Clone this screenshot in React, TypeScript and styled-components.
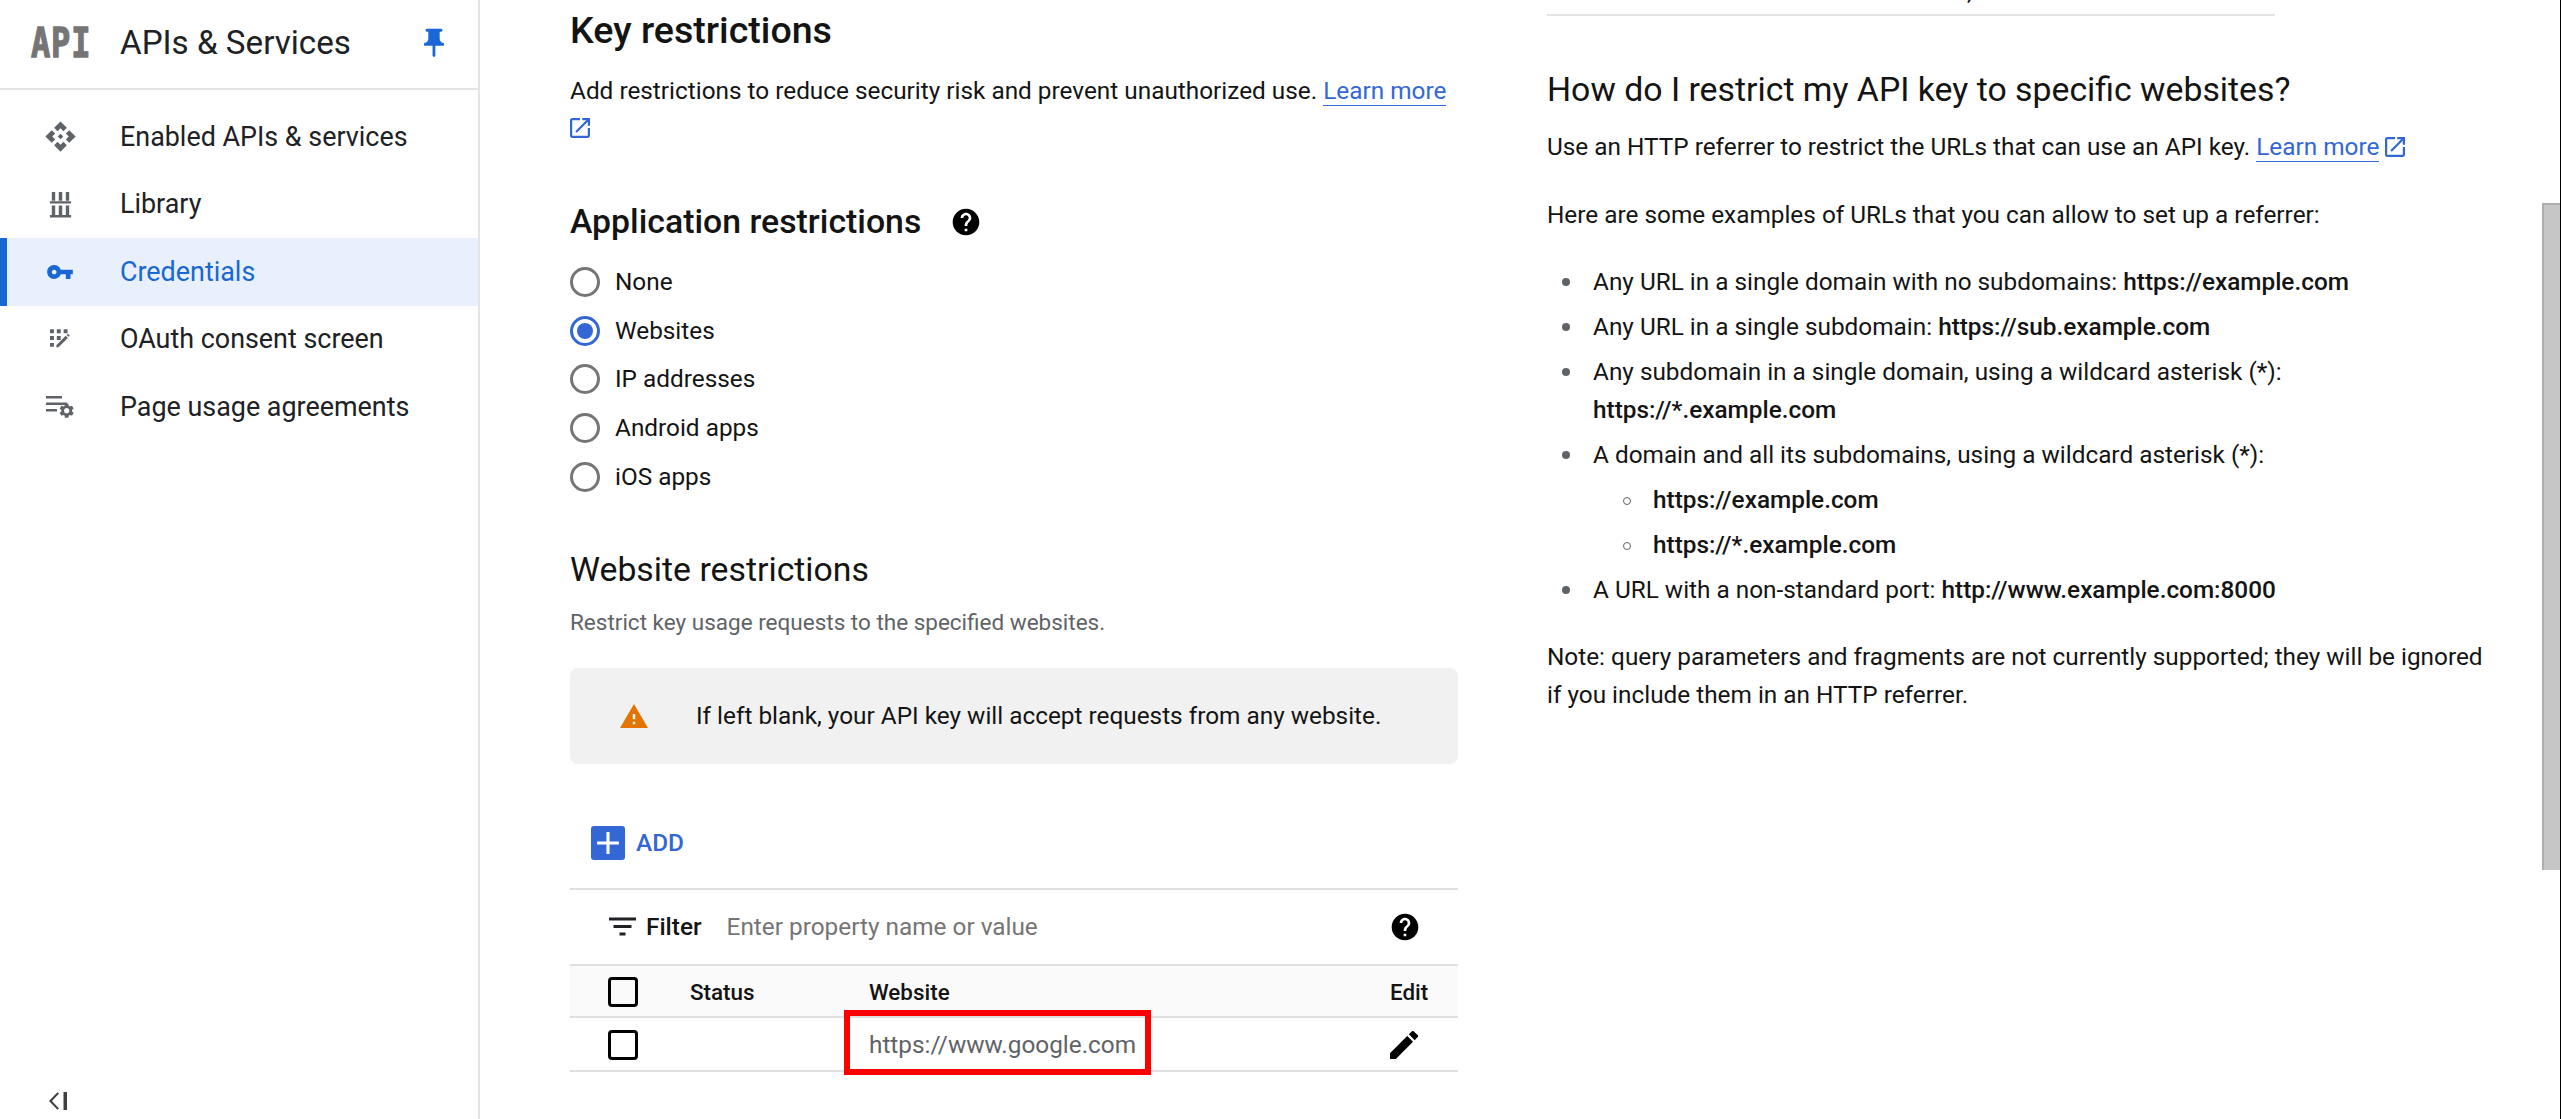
import React from "react";
import styled, { createGlobalStyle } from "styled-components";

const Global = createGlobalStyle`
  html, body { margin: 0; padding: 0; height: 100%; overflow: hidden; background: #fff; }
  body { font-family: Roboto, "Liberation Sans", sans-serif; color: #202124; }
  * { box-sizing: border-box; }
`;

const INK = "#141414";

const Page = styled.div`
  display: flex;
  width: 100%;
  height: 1119px;
  overflow: hidden;
`;

/* ---------- sidebar ---------- */
const Sidebar = styled.aside`
  flex: 0 0 480px;
  display: flex;
  flex-direction: column;
  border-right: 2px solid #e3e4e6;
`;
const SideHeader = styled.header`
  flex: 0 0 90px;
  display: flex;
  align-items: center;
  padding: 0 27px 2px 31px;
  border-bottom: 2px solid #e3e4e6;
`;
const LogoMark = styled.span`
  flex: 0 0 89px;
  font-family: "DejaVu Sans Mono", monospace;
  font-weight: 700;
  font-size: 32px;
  line-height: 30px;
  letter-spacing: 0.8px;
  color: #757575;
  -webkit-text-stroke: 1px #757575;
  display: inline-block;
  transform: scaleY(1.3);
  transform-origin: center;
`;
const SideTitle = styled.div`
  flex: 1;
  font-size: 33.2px;
  line-height: 40px;
  color: #202124;
`;
const Nav = styled.nav`
  display: flex;
  flex-direction: column;
  padding-top: 13px;
`;
const NavItem = styled.a<{ $active?: boolean }>`
  height: 67.5px;
  display: flex;
  align-items: center;
  font-size: 26.9px;
  color: ${(p) => (p.$active ? "#1967d2" : "#202124")};
  background: ${(p) => (p.$active ? "#e8f0fe" : "transparent")};
  box-shadow: ${(p) => (p.$active ? "inset 7px 0 0 #1967d2" : "none")};
`;
const NavIconCell = styled.span`
  flex: 0 0 120px;
  display: flex;
  justify-content: center;
`;
const CollapseRow = styled.div`
  margin-top: auto;
  height: 27px;
  padding-left: 49px;
`;

/* ---------- icons ---------- */
const Icon = styled.svg<{ $size: number; $color?: string }>`
  width: ${(p) => p.$size}px;
  height: ${(p) => p.$size}px;
  fill: ${(p) => p.$color || "currentColor"};
  flex: none;
  display: block;
`;
const InlineLinkIcon = styled.svg<{ $gap: number }>`
  display: inline-block;
  width: 20px;
  height: 20px;
  margin-left: ${(p) => p.$gap}px;
  fill: #3367d6;
  vertical-align: -2px;
`;
const GRAY = "#5f6368";

const ApiIcon = () => (
  <Icon viewBox="0 0 24 24" $size={33} $color={GRAY}>
    <path d="M14 12l-2 2-2-2 2-2 2 2zm-2-6l2.12 2.12 2.5-2.5L12 1 7.38 5.62l2.5 2.5L12 6zm-6 6l2.12-2.12-2.5-2.5L1 12l4.62 4.62 2.5-2.5L6 12zm12 0l-2.12 2.12 2.5 2.5L23 12l-4.62-4.62-2.5 2.5L18 12zm-6 6l-2.12-2.12-2.5 2.5L12 23l4.62-4.62-2.5-2.5L12 18z" />
  </Icon>
);
const LibraryIcon = () => (
  <Icon viewBox="0 0 24 28" $size={27} $color={GRAY}>
    <path d="M3 1h3.500v9H3zM10.200 1h3.600v9h-3.600zM17.500 1H21v9h-3.500zM1 10.500h22v2.500H1zM3 15h3.500v10H3zM10.200 15h3.600v10h-3.600zM17.500 15H21v10h-3.500zM1 25h22v2.500H1z" />
  </Icon>
);
const KeyIcon = () => (
  <Icon viewBox="0 0 24 24" $size={28} $color="#1967d2">
    <path d="M12.65 10C11.83 7.67 9.61 6 7 6c-3.31 0-6 2.69-6 6s2.69 6 6 6c2.61 0 4.83-1.67 5.65-4H17v4h4v-4h2v-4H12.65zM7 14c-1.1 0-2-.9-2-2s.9-2 2-2 2 .9 2 2-.9 2-2 2z" />
  </Icon>
);
const ConsentIcon = () => (
  <Icon viewBox="3 3 20.500 20" $size={20} $color={GRAY}>
    <path d="M3 3h4v4H3zM10 3h4v4h-4zM17 3h4v4h-4zM3 10h4v4H3zM10 10h4v4h-4zM3 17h4v4H3zM9.500 21.500v-2.200l9.600-9.600 2.200 2.200-9.600 9.600zM20 8.800l1.300-1.300 2 2-1.300 1.300z" />
  </Icon>
);
const UsageIcon = () => (
  <Icon viewBox="0 0 30 24" $size={30} $color={GRAY}>
    <path d="M1 1h16v2.400H1zM1 7.500h21v2.400H1zM1 14h11v2.400H1z" />
    <g transform="translate(12.800 6.800) scale(0.74)">
      <path d="M19.140 12.940c.04-.3.06-.61.06-.94 0-.32-.02-.64-.07-.94l2.030-1.580a.49.49 0 0 0 .12-.61l-1.920-3.320a.488.488 0 0 0-.59-.22l-2.390.96c-.5-.38-1.030-.7-1.620-.94l-.36-2.540a.484.484 0 0 0-.48-.41h-3.840c-.24 0-.43.17-.47.41l-.36 2.540c-.59.24-1.130.57-1.620.94l-2.390-.96c-.22-.08-.47 0-.59.22L2.740 8.870c-.12.21-.08.47.12.61l2.030 1.580c-.05.3-.09.63-.09.94s.02.64.07.94l-2.030 1.580a.49.49 0 0 0-.12.61l1.920 3.320c.12.22.37.29.59.22l2.390-.96c.5.38 1.030.7 1.620.94l.36 2.540c.05.24.24.41.48.41h3.840c.24 0 .44-.17.47-.41l.36-2.540c.59-.24 1.130-.56 1.620-.94l2.390.96c.22.08.47 0 .59-.22l1.920-3.320c.12-.22.07-.47-.12-.61l-2.010-1.580zM12 15.600c-1.980 0-3.600-1.620-3.600-3.600s1.620-3.600 3.600-3.600 3.600 1.620 3.600 3.600-1.620 3.600-3.600 3.600z" />
    </g>
  </Icon>
);
const PinIcon = () => (
  <Icon viewBox="0 0 24 24" $size={34} $color="#1a68d8">
    <path d="M16 9V4h1c.55 0 1-.45 1-1s-.45-1-1-1H7c-.55 0-1 .45-1 1s.45 1 1 1h1v5c0 1.660-1.340 3-3 3v2h5.970v7l1 1 1-1v-7H19v-2c-1.660 0-3-1.340-3-3z" />
  </Icon>
);
const CollapseIcon = () => (
  <Icon viewBox="0 0 18 18" $size={18} $color="#3c4043">
    <path d="M10 1.600L8.500.2 0 9l8.500 8.800L10 16.400 3 9zM14.500 0H18v18h-3.500z" />
  </Icon>
);
const HelpIcon = () => (
  <Icon viewBox="0 0 24 24" $size={32} $color="#000">
    <path d="M12 2C6.480 2 2 6.480 2 12s4.480 10 10 10 10-4.480 10-10S17.520 2 12 2zm1 17h-2v-2h2v2zm2.070-7.750l-.9.92C13.450 12.900 13 13.500 13 15h-2v-.5c0-1.100.45-2.100 1.170-2.830l1.240-1.260c.37-.36.59-.86.59-1.410 0-1.100-.9-2-2-2s-2 .9-2 2H8c0-2.210 1.790-4 4-4s4 1.790 4 4c0 .88-.36 1.680-.93 2.250z" />
  </Icon>
);
const LinkIcon = ({ gap }: { gap: number }) => (
  <InlineLinkIcon viewBox="3 3 18 18" $gap={gap}>
    <path d="M19 19H5V5h7V3H5c-1.110 0-2 .9-2 2v14c0 1.100.89 2 2 2h14c1.100 0 2-.9 2-2v-7h-2v7zM14 3v2h3.590l-9.830 9.830 1.410 1.410L19 6.410V10h2V3h-7z" />
  </InlineLinkIcon>
);

/* ---------- main ---------- */
const Main = styled.main`
  flex: 1;
  min-width: 0;
  display: flex;
  gap: 89px;
  padding-left: 90px;
  overflow: hidden;
`;
const LeftColumn = styled.section`
  flex: 0 0 888px;
  padding-top: 7px;
`;
const RightColumn = styled.section`
  flex: 0 0 950px;
`;
const KeyHeading = styled.h2`
  margin: 0 0 19px;
  font-size: 37.6px;
  line-height: 46px;
  font-weight: 500;
  color: ${INK};
`;
const BodyText = styled.p`
  margin: 0;
  font-size: 24.35px;
  line-height: 37px;
  color: ${INK};
`;
const DocLink = styled.a`
  color: #3367d6;
  border-bottom: 1px solid #3367d6;
`;
const AppHeadingRow = styled.div`
  display: flex;
  align-items: center;
  gap: 29px;
  margin-top: 53px;
  height: 46px;
`;
const AppHeading = styled.h3`
  margin: 0;
  font-size: 33.8px;
  font-weight: 500;
  line-height: 46px;
  color: ${INK};
`;
const RadioGroup = styled.div`
  display: flex;
  flex-direction: column;
  margin-top: 13px;
`;
const RadioRow = styled.label`
  height: 48.75px;
  display: flex;
  align-items: center;
  gap: 15px;
  font-size: 24.35px;
  line-height: 28px;
  padding-bottom: 1px;
  color: ${INK};
`;
const RadioCircle = styled.span<{ $on?: boolean }>`
  flex: none;
  width: 30px;
  height: 30px;
  border-radius: 50%;
  border: 3px solid ${(p) => (p.$on ? "#3367d6" : "#757575")};
  display: flex;
  align-items: center;
  justify-content: center;
  &::after {
    content: "";
    display: ${(p) => (p.$on ? "block" : "none")};
    width: 16px;
    height: 16px;
    border-radius: 50%;
    background: #3367d6;
  }
`;
const SectionHeading = styled.h3`
  margin: 47px 0 0;
  font-size: 33.8px;
  line-height: 42px;
  font-weight: 400;
  color: ${INK};
`;
const Hint = styled.p`
  margin: 16px 0 0;
  font-size: 22.5px;
  line-height: 30px;
  color: #5f6368;
`;
const InfoBox = styled.div`
  margin-top: 31px;
  height: 96px;
  display: flex;
  align-items: center;
  padding-left: 50px;
  gap: 48px;
  background: #f1f1f1;
  border-radius: 8px;
  font-size: 24.35px;
  color: ${INK};
`;
const AddRow = styled.div`
  height: 124px;
  display: flex;
  align-items: center;
  gap: 11px;
  padding: 34px 0 0 21px;
  font-size: 24.35px;
  font-weight: 500;
  color: #3367d6;
`;
const AddSquare = styled.span`
  width: 34px;
  height: 34px;
  border-radius: 3px;
  background: #3367d6;
  display: flex;
  align-items: center;
  justify-content: center;
`;
const FilterRow = styled.div`
  height: 76px;
  border-top: 2px solid #e0e0e0;
  display: flex;
  align-items: center;
  padding: 0 37px 0 39px;
  gap: 10px;
  font-size: 24.35px;
`;
const FilterLabel = styled.span`
  font-weight: 500;
  color: ${INK};
  margin-right: 15px;
`;
const FilterInput = styled.span`
  flex: 1;
  color: #757575;
`;
const TableRow = styled.div<{ $head?: boolean }>`
  position: relative;
  display: grid;
  grid-template-columns: 120px 179px 1fr 68px;
  align-items: center;
  height: 54px;
  padding-top: 2px;
  border-top: ${(p) => (p.$head ? "2px solid #e0e0e0" : "none")};
  border-bottom: 2px solid #e0e0e0;
  background: ${(p) => (p.$head ? "#fafafa" : "#fff")};
  font-size: 22.4px;
  font-weight: ${(p) => (p.$head ? 500 : 400)};
  color: ${(p) => (p.$head ? INK : "#5f6368")};
`;
const CheckCell = styled.div`
  padding-left: 38px;
`;
const CheckBox = styled.span`
  display: block;
  width: 30px;
  height: 30px;
  border: 3.4px solid #000;
  border-radius: 4px;
`;
const UrlCell = styled.div`
  position: relative;
  font-size: 24.35px;
`;
const RedMark = styled.span`
  position: absolute;
  left: -25px;
  top: -20px;
  width: 307px;
  height: 65px;
  border: 6px solid #ff0000;
`;

/* ---------- right column ---------- */
const CutRow = styled.div`
  height: 16px;
  width: 728px;
  border-bottom: 2px solid #e3e4e6;
  overflow: hidden;
  padding-left: 420px;
  font-size: 24.35px;
  line-height: 24px;
  color: ${INK};
`;
const CutText = styled.span`
  display: block;
  margin-top: -20px;
`;
const HelpHeading = styled.h3`
  margin: 51px 0 0;
  font-size: 33.8px;
  line-height: 46px;
  font-weight: 400;
  color: ${INK};
`;
const HelpText = styled.p<{ $gap: number }>`
  margin: ${(p) => p.$gap}px 0 0;
  font-size: 24.35px;
  line-height: 38px;
  color: ${INK};
`;
const BulletList = styled.ul`
  margin: 29px 0 0;
  padding: 0 0 0 46px;
  font-size: 24.35px;
  line-height: 38px;
  list-style: none;
  color: ${INK};
`;
const SubList = styled.ul`
  margin: 0;
  padding: 7px 0 0 60px;
  list-style: none;
`;
const Bullet = styled.li<{ $sub?: boolean }>`
  position: relative;
  margin-bottom: 7px;
  &:last-child { margin-bottom: 0; }
  &::before {
    content: "";
    position: absolute;
    border-radius: 50%;
    left: ${(p) => (p.$sub ? "-30px" : "-31px")};
    top: ${(p) => (p.$sub ? "16px" : "15px")};
    width: ${(p) => (p.$sub ? "6px" : "8px")};
    height: ${(p) => (p.$sub ? "6px" : "8px")};
    background: ${(p) => (p.$sub ? "transparent" : "#5f6368")};
    border: ${(p) => (p.$sub ? "1px solid #5f6368" : "none")};
  }
`;
const Strong = styled.b`
  font-weight: 500;
`;

/* ---------- scrollbar ---------- */
const ScrollTrack = styled.div`
  flex: 0 0 19px;
  border-right: 1px solid #000;
  padding-top: 203px;
`;
const ScrollThumb = styled.div`
  height: 667px;
  background: #c6c6c6;
  border-top: 2px solid #aeaeae;
  border-left: 2px solid #aeaeae;
`;

const navItems = [
  { label: "Enabled APIs & services", icon: <ApiIcon /> },
  { label: "Library", icon: <LibraryIcon /> },
  { label: "Credentials", icon: <KeyIcon />, active: true },
  { label: "OAuth consent screen", icon: <ConsentIcon /> },
  { label: "Page usage agreements", icon: <UsageIcon /> },
];
const radios = ["None", "Websites", "IP addresses", "Android apps", "iOS apps"];

export default function App() {
  return (
    <Page>
      <Global />
      <Sidebar>
        <SideHeader>
          <LogoMark>API</LogoMark>
          <SideTitle>APIs &amp; Services</SideTitle>
          <PinIcon />
        </SideHeader>
        <Nav>
          {navItems.map((n) => (
            <NavItem key={n.label} $active={n.active}>
              <NavIconCell>{n.icon}</NavIconCell>
              {n.label}
            </NavItem>
          ))}
        </Nav>
        <CollapseRow>
          <CollapseIcon />
        </CollapseRow>
      </Sidebar>
      <Main>
        <LeftColumn>
          <KeyHeading>Key restrictions</KeyHeading>
          <BodyText>
            Add restrictions to reduce security risk and prevent unauthorized use.{" "}
            <DocLink>Learn more</DocLink> <LinkIcon gap={0} />
          </BodyText>
          <AppHeadingRow>
            <AppHeading>Application restrictions</AppHeading>
            <HelpIcon />
          </AppHeadingRow>
          <RadioGroup>
            {radios.map((r) => (
              <RadioRow key={r}>
                <RadioCircle $on={r === "Websites"} />
                {r}
              </RadioRow>
            ))}
          </RadioGroup>
          <SectionHeading>Website restrictions</SectionHeading>
          <Hint>Restrict key usage requests to the specified websites.</Hint>
          <InfoBox>
            <Icon viewBox="1 2 22 19" $size={28} $color="#e37400">
              <path d="M1 21h22L12 2 1 21zm12-3h-2v-2h2v2zm0-4h-2v-4h2v4z" />
            </Icon>
            If left blank, your API key will accept requests from any website.
          </InfoBox>
          <AddRow>
            <AddSquare>
              <Icon viewBox="3 3 18 18" $size={28} $color="#fff">
                <path d="M19 13h-6v6h-2v-6H5v-2h6V5h2v6h6v2z" />
              </Icon>
            </AddSquare>
            ADD
          </AddRow>
          <FilterRow>
            <Icon viewBox="3 6 18 12" $size={27} $color="#202124">
              <path d="M10 18h4v-2h-4v2zM3 6v2h18V6H3zm3 7h12v-2H6v2z" />
            </Icon>
            <FilterLabel>Filter</FilterLabel>
            <FilterInput>Enter property name or value</FilterInput>
            <HelpIcon />
          </FilterRow>
          <TableRow $head>
            <CheckCell>
              <CheckBox />
            </CheckCell>
            <div>Status</div>
            <div>Website</div>
            <div>Edit</div>
          </TableRow>
          <TableRow>
            <CheckCell>
              <CheckBox />
            </CheckCell>
            <div />
            <UrlCell>
              https://www.google.com
              <RedMark />
            </UrlCell>
            <Icon viewBox="3 3 18 18" $size={28} $color="#000">
              <path d="M3 17.250V21h3.750L17.810 9.940l-3.750-3.750L3 17.250zM20.710 7.040a.996.996 0 0 0 0-1.410l-2.340-2.340a.996.996 0 0 0-1.410 0l-1.830 1.830 3.750 3.750 1.830-1.830z" />
            </Icon>
          </TableRow>
        </LeftColumn>
        <RightColumn>
          <CutRow>
            <CutText>,</CutText>
          </CutRow>
          <HelpHeading>How do I restrict my API key to specific websites?</HelpHeading>
          <HelpText $gap={15}>
            Use an HTTP referrer to restrict the URLs that can use an API key.{" "}
            <DocLink>Learn more</DocLink>
            <LinkIcon gap={6} />
          </HelpText>
          <HelpText $gap={30}>
            Here are some examples of URLs that you can allow to set up a referrer:
          </HelpText>
          <BulletList>
            <Bullet>
              Any URL in a single domain with no subdomains: <Strong>https://example.com</Strong>
            </Bullet>
            <Bullet>
              Any URL in a single subdomain: <Strong>https://sub.example.com</Strong>
            </Bullet>
            <Bullet>
              Any subdomain in a single domain, using a wildcard asterisk (*):{" "}
              <Strong>https://*.example.com</Strong>
            </Bullet>
            <Bullet>
              A domain and all its subdomains, using a wildcard asterisk (*):
              <SubList>
                <Bullet $sub>
                  <Strong>https://example.com</Strong>
                </Bullet>
                <Bullet $sub>
                  <Strong>https://*.example.com</Strong>
                </Bullet>
              </SubList>
            </Bullet>
            <Bullet>
              A URL with a non-standard port: <Strong>http://www.example.com:8000</Strong>
            </Bullet>
          </BulletList>
          <HelpText $gap={29}>
            Note: query parameters and fragments are not currently supported; they will be ignored
            if you include them in an HTTP referrer.
          </HelpText>
        </RightColumn>
      </Main>
      <ScrollTrack>
        <ScrollThumb />
      </ScrollTrack>
    </Page>
  );
}
